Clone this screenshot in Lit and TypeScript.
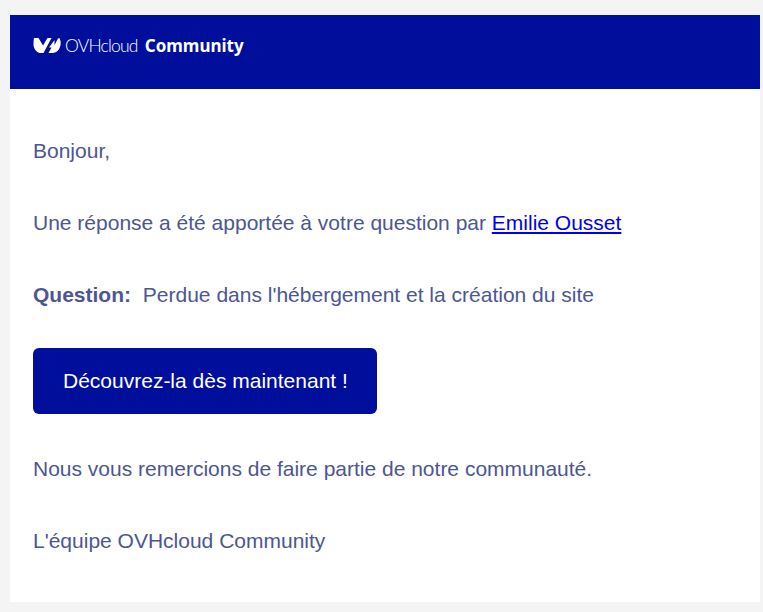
import { LitElement, html, css } from "lit";
import { customElement } from "lit/decorators.js";

@customElement("app-root")
export class AppRoot extends LitElement {
  static styles = css`
    :host {
      display: block;
      min-height: 612px;
      background: #f4f4f4;
      padding: 15px 3px 10px 10px;
      box-sizing: border-box;
      font-family: "Liberation Sans", Arial, sans-serif;
    }
    .card {
      background: #fff;
      height: 587px;
      display: flex;
      flex-direction: column;
    }
    .header {
      background: #000e9c;
      height: 74px;
      box-sizing: border-box;
      display: flex;
      align-items: center;
      padding: 0 0 14px 23px;
      color: #fff;
      flex: none;
    }
    .logo {
      width: 28px;
      height: 17px;
      margin-right: 4px;
      flex: none;
    }
    .brand {
      font-family: "Lato", sans-serif;
      font-size: 17.5px;
      font-weight: 300;
      letter-spacing: -0.8px;
      margin-right: 7px;
    }
    .community {
      font-family: "Noto Sans", sans-serif;
      font-size: 17px;
      font-weight: 700;
    }
    .body {
      padding: 50px 23px 0;
      display: flex;
      flex-direction: column;
      font-size: 21px;
      line-height: 24px;
      color: #4d5693;
    }
    .row {
      margin-bottom: 48px;
    }
    .row a {
      color: #0000ee;
      text-decoration: underline;
    }
    .row b {
      margin-right: 6px;
    }
    .button {
      align-self: flex-start;
      background: #000e9c;
      color: #fff;
      padding: 21px 29px 21px 30px;
      border-radius: 6px;
      margin: -7px 0 43px;
      text-decoration: none;
    }
    .last {
      margin-bottom: 0;
    }
  `;

  render() {
    return html`
      <div class="card">
        <div class="header">
          <svg class="logo" viewBox="0 0 28 17" aria-hidden="true">
            <path fill="#fff" d="M1 1 L5.5 1 L10 8.5 L14.5 1 L18.5 1 L10.5 16 L6.5 16 Q1.5 14.5 0.5 8.5 Q0.3 4 1 1 Z" />
            <path fill="#fff" d="M26.5 1 Q28.3 5 27.3 9 Q25.8 15 20 16 L15.5 16 L18.5 10.5 L16 10.5 L21.5 3 L21.5 8 L25 1.5 Z" />
          </svg>
          <span class="brand">OVHcloud</span>
          <span class="community">Community</span>
        </div>
        <div class="body">
          <div class="row">Bonjour,</div>
          <div class="row">Une réponse a été apportée à votre question par <a href="#">Emilie Ousset</a></div>
          <div class="row"><b>Question:</b> Perdue dans l'hébergement et la création du site</div>
          <a class="button" href="#">Découvrez-la dès maintenant !</a>
          <div class="row">Nous vous remercions de faire partie de notre communauté.</div>
          <div class="row last">L'équipe OVHcloud Community</div>
        </div>
      </div>
    `;
  }
}
